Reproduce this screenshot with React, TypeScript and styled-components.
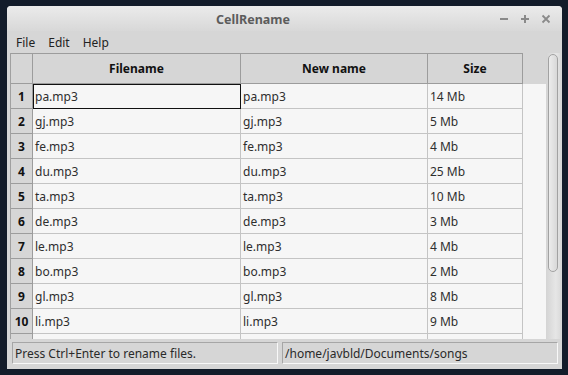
import styled, { createGlobalStyle } from "styled-components"

const GlobalStyle = createGlobalStyle`
  html, body {
    margin: 0;
    padding: 0;
    background: #131c2a;
  }
  body {
    font-family: "Noto Sans", "Open Sans", sans-serif;
    font-size: 12px;
    color: #2c2c2c;
  }
`

const files = [
  { name: "pa.mp3", size: "14 Mb" },
  { name: "gj.mp3", size: "5 Mb" },
  { name: "fe.mp3", size: "4 Mb" },
  { name: "du.mp3", size: "25 Mb" },
  { name: "ta.mp3", size: "10 Mb" },
  { name: "de.mp3", size: "3 Mb" },
  { name: "le.mp3", size: "4 Mb" },
  { name: "bo.mp3", size: "2 Mb" },
  { name: "gl.mp3", size: "8 Mb" },
  { name: "li.mp3", size: "9 Mb" },
]

const COLUMNS = "22px 208px 187px 95px 1fr"

export default function App() {
  return (
    <>
      <GlobalStyle />
      <Desktop>
        <Window>
          <TitleBar>
            <Title>CellRename</Title>
            <WindowButtons>
              <WinButton aria-label="minimize">
                <svg width="10" height="10" viewBox="0 0 10 10">
                  <path d="M1 5h8" stroke="#8a8a8a" strokeWidth="2" />
                </svg>
              </WinButton>
              <WinButton aria-label="maximize">
                <svg width="10" height="10" viewBox="0 0 10 10">
                  <path d="M1 5h8M5 1v8" stroke="#8a8a8a" strokeWidth="2" />
                </svg>
              </WinButton>
              <WinButton aria-label="close">
                <svg width="10" height="10" viewBox="0 0 10 10">
                  <path d="M1.5 1.5l7 7M8.5 1.5l-7 7" stroke="#8a8a8a" strokeWidth="1.8" />
                </svg>
              </WinButton>
            </WindowButtons>
          </TitleBar>

          <MenuBar>
            <MenuItem>File</MenuItem>
            <MenuItem>Edit</MenuItem>
            <MenuItem>Help</MenuItem>
          </MenuBar>

          <TableFrame>
            <Viewport>
              <HeaderRow>
                <HeaderCell />
                <HeaderCell>Filename</HeaderCell>
                <HeaderCell>New name</HeaderCell>
                <HeaderCell>Size</HeaderCell>
                <Filler />
              </HeaderRow>
              {files.map((f, i) => (
                <Row key={i}>
                  <RowNumber>{i + 1}</RowNumber>
                  <Cell $current={i === 0}>{f.name}</Cell>
                  <Cell>{f.name}</Cell>
                  <Cell>{f.size}</Cell>
                  <Filler />
                </Row>
              ))}
              {/* next row, scrolled mostly out of view */}
              <Row>
                <RowNumber />
                <Cell />
                <Cell />
                <Cell />
                <Filler />
              </Row>
            </Viewport>
            <ScrollTrack>
              <ScrollHandle />
            </ScrollTrack>
          </TableFrame>

          <StatusBar>
            <StatusPanel $width="266px">Press Ctrl+Enter to rename files.</StatusPanel>
            <StatusPanel>/home/javbld/Documents/songs</StatusPanel>
          </StatusBar>
        </Window>
      </Desktop>
    </>
  )
}

const Desktop = styled.div`
  width: 568px;
  height: 375px;
  padding: 6px 6px 0 7px;
  box-sizing: border-box;
`

const Window = styled.div`
  width: 555px;
  height: 363px;
  background: #d6d6d6;
  border-radius: 4px 4px 0 0;
  display: flex;
  flex-direction: column;
  overflow: hidden;
`

const TitleBar = styled.div`
  height: 25px;
  display: flex;
  align-items: center;
  background: linear-gradient(#ebebeb, #d8d8d8);
`

const Title = styled.div`
  flex: 1;
  text-align: center;
  font-weight: bold;
  font-size: 12.5px;
  color: #5c5c5c;
  padding-top: 1px;
`

const WindowButtons = styled.div`
  width: 63px;
  display: flex;
  gap: 11px;
`

const WinButton = styled.div`
  width: 10px;
  height: 10px;
  display: flex;
`

const MenuBar = styled.div`
  height: 22px;
  display: flex;
  align-items: center;
  padding-left: 9px;
  gap: 13px;
`

const MenuItem = styled.div`
  font-size: 12px;
  color: #222;
`

const TableFrame = styled.div`
  height: 286px;
  margin: 0 2px 0 3px;
  display: flex;
`

const Viewport = styled.div`
  flex: 1;
  overflow: hidden;
  background: #f6f6f6;
  border-left: 1px solid #a0a0a0;
`

const HeaderRow = styled.div`
  display: grid;
  grid-template-columns: ${COLUMNS};
  height: 31px;
  background: #d6d6d6;
`

const HeaderCell = styled.div`
  display: flex;
  align-items: center;
  justify-content: center;
  font-weight: bold;
  font-size: 12px;
  color: #111;
  border-top: 1px solid #9c9c9c;
  border-right: 1px solid #9c9c9c;
  border-bottom: 1px solid #9c9c9c;
  box-sizing: border-box;
`

const Row = styled.div`
  display: grid;
  grid-template-columns: ${COLUMNS};
  height: 25px;
`

const RowNumber = styled.div`
  display: flex;
  align-items: center;
  justify-content: center;
  background: #d6d6d6;
  font-weight: bold;
  font-size: 12px;
  color: #111;
  border-right: 1px solid #9c9c9c;
  border-bottom: 1px solid #9c9c9c;
  box-sizing: border-box;
`

const Cell = styled.div<{ $current?: boolean }>`
  display: flex;
  align-items: center;
  padding-left: 2px;
  font-size: 12px;
  color: #2e2e2e;
  box-sizing: border-box;
  border-right: 1px solid #c4c4c4;
  border-bottom: 1px solid #c4c4c4;
  ${(p) => p.$current && "outline: 1.5px solid #111; outline-offset: -1.5px;"}
`

const Filler = styled.div``

const ScrollTrack = styled.div`
  width: 14px;
  background: linear-gradient(90deg, #d4d4d4, #e6e6e6 70%, #dcdcdc);
  padding: 1px 2px 0 2px;
  box-sizing: border-box;
`

const ScrollHandle = styled.div`
  height: 218px;
  border: 1px solid #a2a2a2;
  border-radius: 5px;
  background: linear-gradient(90deg, #ececec, #d8d8d8);
  box-sizing: border-box;
`

const StatusBar = styled.div`
  display: flex;
  gap: 4px;
  padding: 3px 4px 0 5px;
`

const StatusPanel = styled.div<{ $width?: string }>`
  width: ${(p) => p.$width ?? "auto"};
  flex: ${(p) => (p.$width ? "none" : "1")};
  height: 22px;
  box-sizing: border-box;
  display: flex;
  align-items: center;
  padding-left: 2px;
  font-size: 12px;
  color: #2a2a2a;
  border-top: 1px solid #a6a6a6;
  border-left: 1px solid #a6a6a6;
  border-right: 1px solid #f8f8f8;
  border-bottom: 1px solid #f8f8f8;
`
